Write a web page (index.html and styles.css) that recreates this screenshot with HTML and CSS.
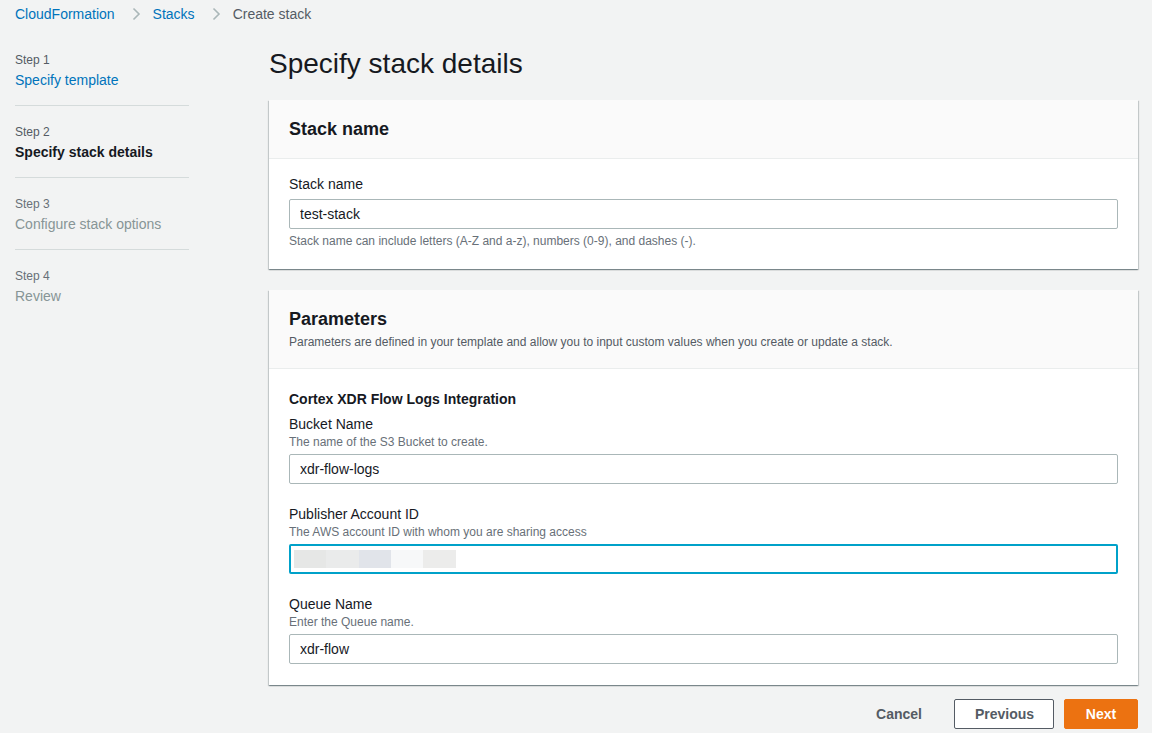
FILE: index.html
```html
<!DOCTYPE html>
<html lang="en">
<head>
  <meta charset="UTF-8">
  <meta name="viewport" content="width=device-width, initial-scale=1.0">
  <title>Create stack - CloudFormation</title>
  <link rel="stylesheet" href="styles.css">
</head>
<body>
  <nav class="crumbs">
    <a href="#">CloudFormation</a>
    <svg class="chev" width="16" height="16" viewBox="0 0 16 16"><path d="M5.5 2.5 11 8l-5.5 5.5" fill="none" stroke="#aab7b8" stroke-width="1.6"/></svg>
    <a href="#">Stacks</a>
    <svg class="chev" width="16" height="16" viewBox="0 0 16 16"><path d="M5.5 2.5 11 8l-5.5 5.5" fill="none" stroke="#aab7b8" stroke-width="1.6"/></svg>
    <span class="here">Create stack</span>
  </nav>

  <div class="page">
    <ul class="steps">
      <li>
        <div class="step-no">Step 1</div>
        <a class="step-name link" href="#">Specify template</a>
      </li>
      <li>
        <div class="step-no">Step 2</div>
        <div class="step-name current">Specify stack details</div>
      </li>
      <li>
        <div class="step-no">Step 3</div>
        <div class="step-name off">Configure stack options</div>
      </li>
      <li>
        <div class="step-no">Step 4</div>
        <div class="step-name off">Review</div>
      </li>
    </ul>

    <main class="main">
      <h1>Specify stack details</h1>

      <section class="card">
        <div class="card-head">
          <h2>Stack name</h2>
        </div>
        <div class="card-body">
          <label class="field-label">Stack name</label>
          <input class="field" value="test-stack">
          <div class="hint">Stack name can include letters (A-Z and a-z), numbers (0-9), and dashes (-).</div>
        </div>
      </section>

      <section class="card">
        <div class="card-head">
          <h2>Parameters</h2>
          <div class="head-desc">Parameters are defined in your template and allow you to input custom values when you create or update a stack.</div>
        </div>
        <div class="card-body">
          <h3>Cortex XDR Flow Logs Integration</h3>

          <div class="param">
            <label class="field-label">Bucket Name</label>
            <div class="desc">The name of the S3 Bucket to create.</div>
            <input class="field" value="xdr-flow-logs">
          </div>

          <div class="param">
            <label class="field-label">Publisher Account ID</label>
            <div class="desc">The AWS account ID with whom you are sharing access</div>
            <div class="field focus">
              <span class="masked">
                <i style="background:#e6e7e6"></i><i style="background:#eaebeb"></i><i style="background:#e1e4ea"></i><i style="background:#f7f8f9"></i><i style="background:#ececeb"></i>
              </span>
            </div>
          </div>

          <div class="param">
            <label class="field-label">Queue Name</label>
            <div class="desc">Enter the Queue name.</div>
            <input class="field" value="xdr-flow">
          </div>
        </div>
      </section>

      <div class="actions">
        <button class="btn-link">Cancel</button>
        <button class="btn">Previous</button>
        <button class="btn primary">Next</button>
      </div>
    </main>
  </div>
</body>
</html>
```

FILE: styles.css
```css
body { margin: 0; background: #f2f3f3; color: #16191f; font-family: "Liberation Sans", Arial, sans-serif; font-size: 14px; }
a { color: #0073bb; text-decoration: none; }

.crumbs { display: flex; align-items: center; height: 28px; padding-left: 15px; font-size: 14px; }
.crumbs .chev { margin: 0 9px 0 13px; }
.crumbs .here { color: #545b64; }

.page { display: grid; grid-template-columns: 174px 1fr; column-gap: 80px; padding: 0 14px 0 15px; }

.steps { list-style: none; margin: 0; padding: 24px 0 0; }
.steps li { padding: 0 0 15px; margin-bottom: 18px; border-bottom: 1px solid #d5dbdb; }
.steps li:last-child { border-bottom: none; }
.step-no { font-size: 12px; color: #545b64; line-height: 16px; margin-bottom: 2px; }
.step-name { display: block; line-height: 20px; }
.step-name.current { font-weight: bold; color: #16191f; }
.step-name.off { color: #879596; }
.steps li:nth-child(n+3) .step-no { color: #687078; }

.main { padding-top: 19px; }
h1 { font-size: 28px; font-weight: normal; margin: 0 0 19px; line-height: 34px; }

.card { background: #fff; margin-bottom: 21px; box-shadow: 0 1px 1px 0 rgba(0,28,36,.3), 1px 1px 1px 0 rgba(0,28,36,.15), -1px 1px 1px 0 rgba(0,28,36,.15); }
.card:last-of-type { margin-bottom: 0; }
.card-head { background: #fafafa; border-bottom: 1px solid #eaeded; padding: 18px 20px 18px; }
.card-head h2 { margin: 0; font-size: 18px; line-height: 22px; font-weight: bold; }
.head-desc { font-size: 12px; color: #545b64; line-height: 16px; margin-top: 4px; }
.card-body { padding: 15px 20px 20px; }
.card:last-of-type .card-body { padding-bottom: 21px; }

.field-label { display: block; line-height: 20px; margin-bottom: 5px; }
.param .field-label { margin-bottom: 0; }
.desc { font-size: 12px; color: #687078; line-height: 16px; margin-bottom: 4px; }
.hint { font-size: 12px; color: #687078; line-height: 16px; margin-top: 4px; }

.field { display: block; box-sizing: border-box; width: 100%; height: 30px; border: 1px solid #aab7b8; border-radius: 2px; background: #fff; padding: 0 10px; font: inherit; color: #16191f; }
.field.focus { border: 2px solid #00a1c9; padding: 0 3px; display: flex; align-items: center; }
.masked { display: flex; }
.masked i { display: block; width: 32px; height: 18px; }
.masked i:nth-child(2), .masked i:nth-child(5) { width: 33px; }

h3 { margin: 0 0 5px; font-size: 14px; font-weight: bold; line-height: 20px; padding-top: 5px; }
.param { margin-bottom: 20px; }
.param:last-child { margin-bottom: 0; }

.actions { display: flex; justify-content: flex-end; align-items: center; gap: 10px; padding-top: 14px; }
.actions button { font: inherit; font-weight: bold; height: 30px; border-radius: 2px; cursor: pointer; }
.btn-link { background: none; border: none; color: #545b64; padding: 0 20px; margin-right: 2px; }
.btn { background: #fff; border: 1px solid #545b64; color: #545b64; padding: 0 20px; width: 100px; }
.btn.primary { background: #ec7211; border-color: #ec7211; color: #fff; width: 74px; }
```
